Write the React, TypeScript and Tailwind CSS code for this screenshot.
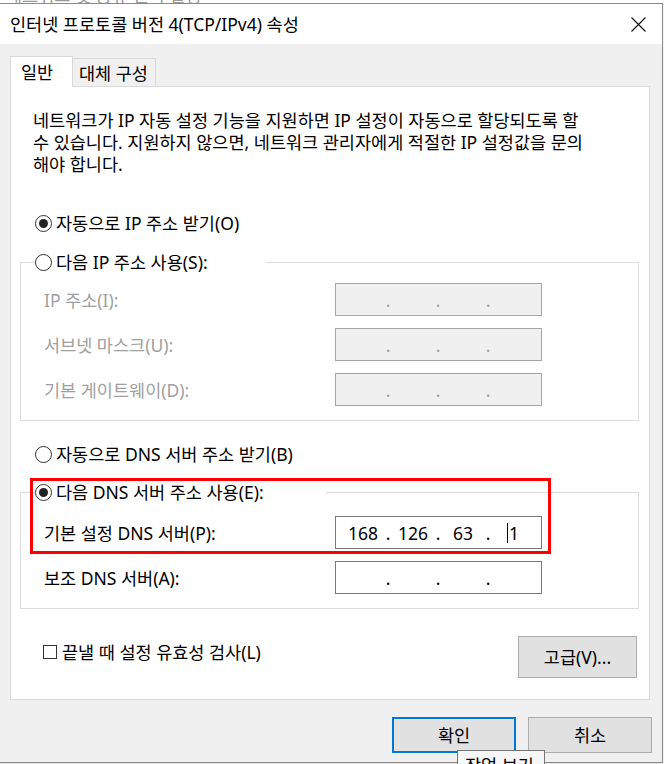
import React from 'react';

const Radio = ({ checked }: { checked?: boolean }) => (
  <span className="flex h-[17px] w-[17px] shrink-0 items-center justify-center rounded-full border border-[#333] bg-white">
    {checked && <span className="h-[9px] w-[9px] rounded-full bg-[#222]" />}
  </span>
);

interface IpBoxProps {
  values?: string[];
  disabled?: boolean;
  caret?: boolean;
}

const IpBox: React.FC<IpBoxProps> = ({ values = ['', '', '', ''], disabled, caret }) => (
  <div
    className={`flex h-[33px] w-[207px] shrink-0 items-center border pl-[8px] ${
      disabled ? 'border-[#a6a6a6] bg-[#f0f0f0] text-[#a0a0a0]' : 'border-[#7a7a7a] bg-white text-black'
    }`}
  >
    {values.map((v, i) => (
      <React.Fragment key={i}>
        <span className="flex w-[38px] items-center justify-center">
          {caret && i === 3 && <span className="mr-[1px] inline-block h-[20px] w-[1px] bg-black" />}
          {v}
        </span>
        {i < 3 && <span className="w-[12px] text-center">.</span>}
      </React.Fragment>
    ))}
  </div>
);

interface IpRowProps extends IpBoxProps {
  label: string;
}

const IpRow: React.FC<IpRowProps> = ({ label, disabled, values, caret }) => (
  <div className="flex items-center pl-[23px]">
    <span className={`w-[291px] ${disabled ? 'text-[#a0a0a0]' : 'text-black'}`}>{label}</span>
    <IpBox values={values} disabled={disabled} caret={caret} />
  </div>
);

export default function App() {
  return (
    <div className="relative h-[764px] w-[664px] overflow-hidden whitespace-nowrap bg-[#e6e6e6] font-['Noto_Sans','Noto_Sans_CJK_KR',sans-serif] text-[17.5px] leading-[24px] text-black">
      {/* window behind */}
      <div className="h-[3px] overflow-hidden bg-white pl-[6px] text-[#9a9a9a]">
        <span className="-mt-[17px] block">네트워크 및 공유 센터 설정</span>
      </div>

      <div className="flex">
        <div className="w-[663px] border-y border-r border-[#8a8a8a] bg-[#f0f0f0]">
          {/* Title bar */}
          <div className="flex h-[40px] items-center justify-between bg-white pl-[10px] pr-[16px]">
            <span>인터넷 프로토콜 버전 4(TCP/IPv4) 속성</span>
            <svg width="15" height="15" viewBox="0 0 15 15" fill="none" stroke="#111" strokeWidth="1.1">
              <path d="M0.5 0.5L14.5 14.5M14.5 0.5L0.5 14.5" />
            </svg>
          </div>

          {/* Tabs */}
          <div className="ml-[10px] mt-[12px] flex h-[30px] items-end">
            <div className="relative z-10 -mb-px flex h-[31px] w-[63px] items-center border border-b-0 border-[#d9d9d9] bg-white pl-[10px]">
              일반
            </div>
            <div className="flex h-[28px] w-[83px] items-center border border-b-0 border-l-0 border-[#d9d9d9] bg-[#f0f0f0] pl-[6px]">
              대체 구성
            </div>
          </div>

          {/* Panel */}
          <div className="relative ml-[10px] h-[614px] w-[640px] border border-[#d9d9d9] bg-white pt-[22px]">
            <p className="pl-[22px] leading-[22px]">
              네트워크가 IP 자동 설정 기능을 지원하면 IP 설정이 자동으로 할당되도록 할
              <br />
              수 있습니다. 지원하지 않으면, 네트워크 관리자에게 적절한 IP 설정값을 문의
              <br />
              해야 합니다.
            </p>

            <div className="ml-[24px] mt-[36px] flex h-[24px] items-center gap-[4px]">
              <Radio checked />
              <span>자동으로 IP 주소 받기(O)</span>
            </div>

            <fieldset className="ml-[9px] mr-[10px] mt-[15px] border border-[#dcdcdc] pb-[14px]">
              <legend className="ml-[14px] w-[231px]">
                <div className="flex h-[24px] items-center gap-[4px]">
                  <Radio />
                  <span>다음 IP 주소 사용(S):</span>
                </div>
              </legend>
              <div className="flex flex-col gap-[12px] pt-[9px]">
                <IpRow label="IP 주소(I):" disabled />
                <IpRow label="서브넷 마스크(U):" disabled />
                <IpRow label="기본 게이트웨이(D):" disabled />
              </div>
            </fieldset>

            <div className="ml-[24px] mt-[21px] flex h-[24px] items-center gap-[4px]">
              <Radio />
              <span>자동으로 DNS 서버 주소 받기(B)</span>
            </div>

            <fieldset className="ml-[9px] mr-[10px] mt-[14px] border border-[#dcdcdc] pb-[14px]">
              <legend className="ml-[14px] w-[291px]">
                <div className="flex h-[24px] items-center gap-[4px]">
                  <Radio checked />
                  <span>다음 DNS 서버 주소 사용(E):</span>
                </div>
              </legend>
              <div className="flex flex-col gap-[12px] pt-[12px]">
                <IpRow label="기본 설정 DNS 서버(P):" values={['168', '126', '63', '1']} caret />
                <IpRow label="보조 DNS 서버(A):" />
              </div>
            </fieldset>

            <div className="mt-[27px] flex items-start justify-between pl-[32px] pr-[12px]">
              <div className="mt-[4px] flex h-[24px] items-center gap-[5px]">
                <span className="h-[14px] w-[14px] border border-[#333] bg-white" />
                <span>끝낼 때 설정 유효성 검사(L)</span>
              </div>
              <button className="h-[42px] w-[119px] border border-[#adadad] bg-[#e1e1e1]">고급(V)...</button>
            </div>

            {/* annotation */}
            <div className="absolute left-[19px] top-[391px] h-[76px] w-[521px] border-[3px] border-[#ff0000]" />
          </div>

          {/* Buttons */}
          <div className="mb-[9px] mt-[17px] flex justify-end gap-[12px] pr-[10px]">
            <button className="h-[36px] w-[124px] border-2 border-[#0078d7] bg-[#e1e1e1]">확인</button>
            <button className="h-[36px] w-[124px] border border-[#adadad] bg-[#e1e1e1]">취소</button>
          </div>
        </div>
        <div className="flex-1 bg-[#f4f4f4]" />
      </div>

      {/* tooltip */}
      <div className="absolute left-[457px] top-[750px] h-[30px] w-[88px] border border-[#767676] bg-[#f7f7f7] pl-[7px] pt-[2px]">
        작업 보기
      </div>
    </div>
  );
}
